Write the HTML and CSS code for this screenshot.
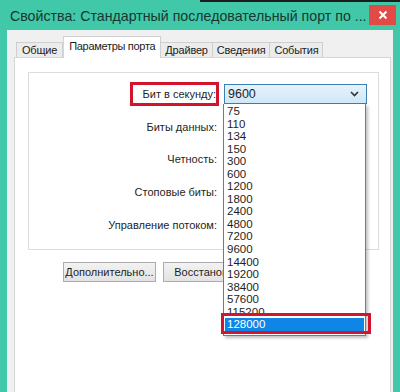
FILE: index.html
```html
<!DOCTYPE html>
<html lang="ru">
<head>
    <meta charset="UTF-8" />
    <title>Свойства порта</title>
    <link rel="stylesheet" href="styles.css">
</head>
<body>
    <div class="window">
        <div class="titlebar">
            <span class="title">Свойства: Стандартный последовательный порт по ...</span>
            <button class="close" type="button">
                <svg width="10" height="10" viewBox="0 0 10 10"><path d="M1.5 1.5 L8.5 8.5 M8.5 1.5 L1.5 8.5" stroke="#fff" stroke-width="2" /></svg>
            </button>
        </div>

        <div class="frame">
            <div class="tabs">
                <div class="tab">Общие</div>
                <div class="tab active">Параметры порта</div>
                <div class="tab">Драйвер</div>
                <div class="tab">Сведения</div>
                <div class="tab">События</div>
            </div>

            <div class="panel">
                <div class="group">
                    <div class="row">
                        <label class="lbl"><span class="mark">Бит в секунду:</span></label>
                        <div class="combo">
                            <span>9600</span>
                            <svg width="9" height="6" viewBox="0 0 9 6"><path d="M1 1 L4.5 4.5 L8 1" fill="none" stroke="#333" stroke-width="1.6" /></svg>
                        </div>
                    </div>
                    <div class="row">
                        <label class="lbl">Биты данных:</label>
                    </div>
                    <div class="row">
                        <label class="lbl">Четность:</label>
                    </div>
                    <div class="row">
                        <label class="lbl">Стоповые биты:</label>
                    </div>
                    <div class="row">
                        <label class="lbl">Управление потоком:</label>
                    </div>
                </div>

                <div class="buttons">
                    <button type="button">Дополнительно...</button>
                    <button type="button">Восстановить</button>
                </div>

                <ul class="droplist">
                    <li>75</li>
                    <li>110</li>
                    <li>134</li>
                    <li>150</li>
                    <li>300</li>
                    <li>600</li>
                    <li>1200</li>
                    <li>1800</li>
                    <li>2400</li>
                    <li>4800</li>
                    <li>7200</li>
                    <li>9600</li>
                    <li>14400</li>
                    <li>19200</li>
                    <li>38400</li>
                    <li>57600</li>
                    <li>115200</li>
                    <li class="selected">128000</li>
                </ul>
            </div>
        </div>
    </div>
</body>
</html>
```

FILE: styles.css
```css
* {
    margin: 0;
    padding: 0;
    box-sizing: border-box;
}

body {
    width: 400px;
    height: 392px;
    overflow: hidden;
    background: #41c8a8;
    font-family: 'Liberation Sans', Arial, sans-serif;
    font-size: 11px;
    color: #1e1e1e;
}

.window {
    height: 392px;
    display: flex;
    flex-direction: column;
    position: relative;
}

/* тёмная полоска сверху от соседнего окна */
.window::before {
    content: "";
    position: absolute;
    top: 0;
    left: 200px;
    right: 0;
    height: 2px;
    background: #1d1d1d;
}

.titlebar {
    height: 30px;
    display: flex;
    align-items: flex-start;
    padding-left: 10px;
}

.title {
    margin-top: 8px;
    font-size: 14.2px;
    color: #17372f;
    white-space: nowrap;
}

.close {
    flex-shrink: 0;
    margin-left: auto;
    margin-right: 4px;
    margin-top: 5px;
    width: 27px;
    height: 20px;
    border: none;
    background: #e04b45;
    display: flex;
    align-items: center;
    justify-content: center;
}

.frame {
    flex: 1;
    margin: 0 7px;
    background: #f0f0f0;
    padding: 5px 2px 0 7px;
    display: flex;
    flex-direction: column;
}

.tabs {
    height: 22px;
    display: flex;
    align-items: flex-end;
    padding-left: 2px;
}

.tab {
    height: 15px;
    padding: 0 4px;
    border: 1px solid #cfcfcf;
    border-bottom: none;
    border-left: none;
    background: #ececec;
    line-height: 14px;
    letter-spacing: -0.2px;
    color: #222;
}

.tab:first-child {
    border-left: 1px solid #cfcfcf;
    padding: 0 5px;
}

.tab.active {
    height: 22px;
    margin-bottom: -1px;
    padding: 0 5px;
    background: #fff;
    border-left: 1px solid #d6d6d6;
    line-height: 18px;
    letter-spacing: -0.3px;
    position: relative;
    z-index: 1;
}

.panel {
    flex: 1;
    background: #fff;
    border: 1px solid #d6d6d6;
    border-bottom: none;
    position: relative;
}

.group {
    margin: 14px 11px 0 13px;
    height: 178px;
    border: 1px solid #dcdcdc;
    padding-top: 4.5px;
}

.row {
    height: 32.75px;
    display: grid;
    grid-template-columns: 188px 143px;
    column-gap: 7px;
    align-items: center;
}

.lbl {
    text-align: right;
    white-space: nowrap;
}

.mark {
    display: inline-block;
    border: 3px solid #d4142c;
    padding: 3px 0 3px 10px;
    margin-right: -2px;
}

.combo {
    height: 20px;
    border: 1px solid #3c7fb1;
    background: linear-gradient(#e6f3fb, #cfe7f7);
    font-size: 12.5px;
    display: flex;
    align-items: center;
    justify-content: space-between;
    padding: 0 7px 0 3px;
}

.buttons {
    margin-top: 12px;
    padding-left: 48px;
    display: flex;
    gap: 7px;
}

.buttons button {
    width: 93px;
    height: 20px;
    border: 1px solid #acacac;
    background: linear-gradient(#f2f2f2, #e3e3e3);
    font-family: inherit;
    font-size: 11px;
    color: #1e1e1e;
    white-space: nowrap;
    overflow: hidden;
}

/* раскрытый список скоростей */
.droplist {
    position: absolute;
    left: 208px;
    top: 46px;
    width: 143px;
    list-style: none;
    background: #fff;
    border: 1px solid #7a7a7a;
    border-top: none;
    padding: 1px 1px 4px 1px;
    box-shadow: 2px 2px 3px rgba(0, 0, 0, 0.25);
    font-size: 11.5px;
    z-index: 2;
}

.droplist li {
    height: 12.56px;
    line-height: 12.56px;
    padding-left: 2px;
}

.droplist li.selected {
    background: #0f86e6;
    color: #fff;
    position: relative;
}

.droplist li.selected::after {
    content: "";
    position: absolute;
    top: -5px;
    left: -4px;
    right: -7px;
    bottom: -3px;
    border: 3px solid #d4142c;
}
```
